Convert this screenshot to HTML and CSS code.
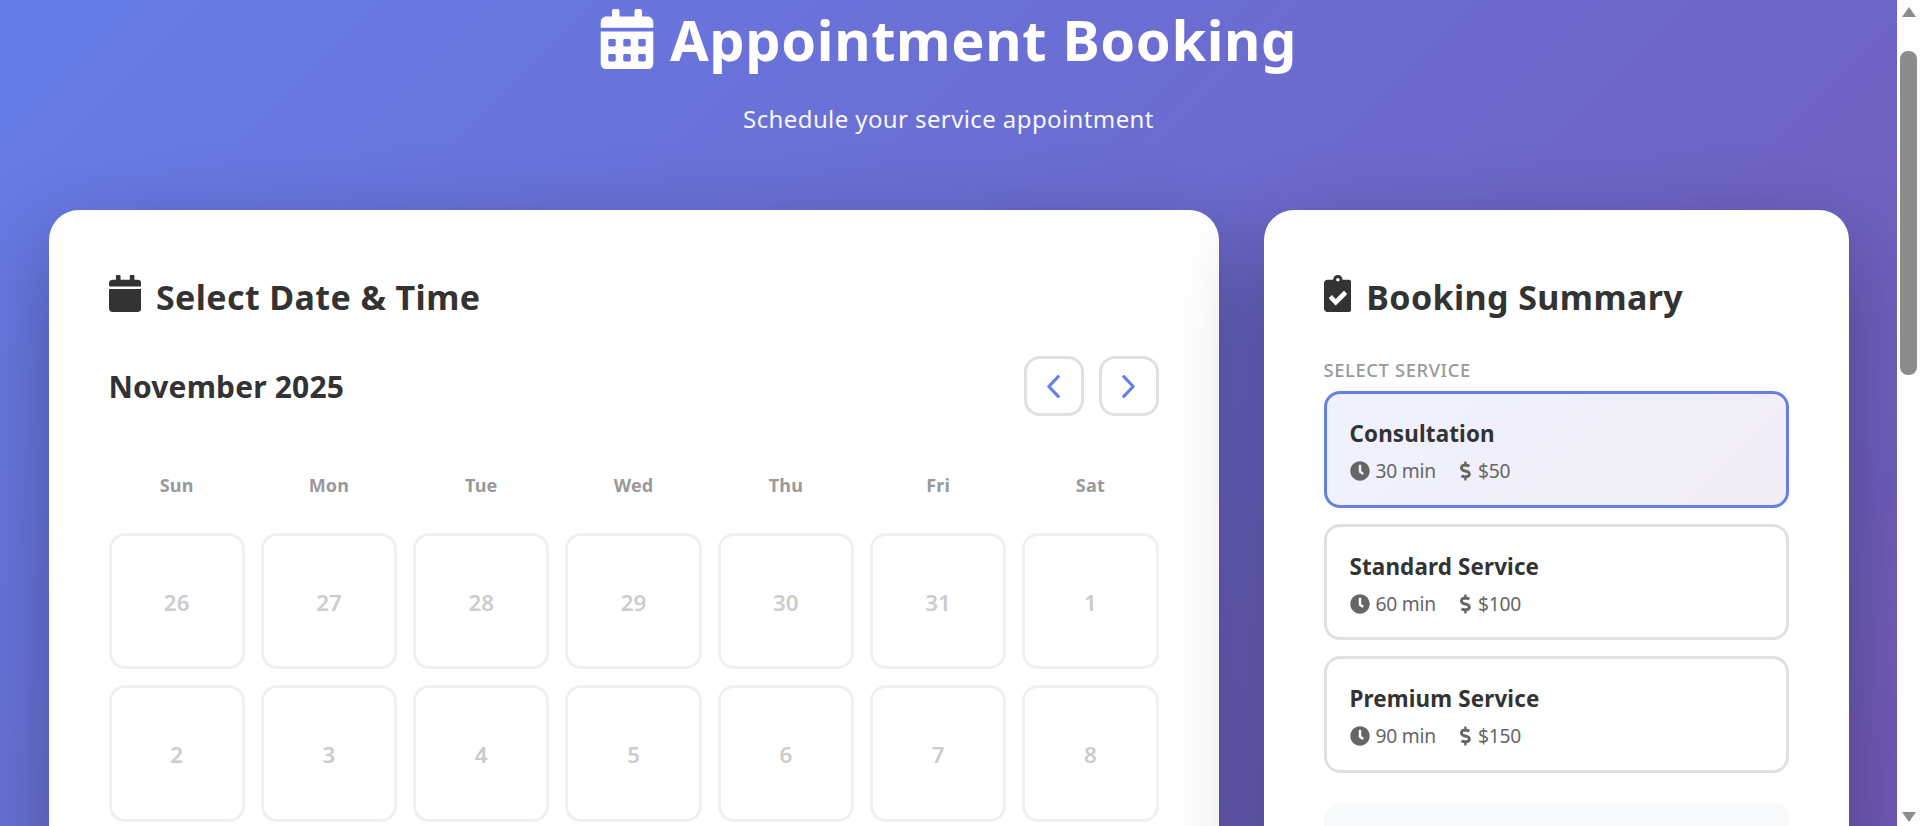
FILE: index.html
```html
<!DOCTYPE html>
<html lang="en">
<head>
  <meta charset="UTF-8">
  <meta name="viewport" content="width=device-width, initial-scale=1.0">
  <title>Appointment Booking</title>
  <link rel="stylesheet" href="styles.css">
</head>
<body>
  <div class="viewport">
    <div class="page">
      <header class="page-header">
        <h1>
          <svg class="h1-icon" viewBox="0 0 448 512"><path d="M0 464c0 26.5 21.5 48 48 48h352c26.5 0 48-21.5 48-48V192H0v272zm320-196c0-6.6 5.4-12 12-12h40c6.6 0 12 5.4 12 12v40c0 6.6-5.4 12-12 12h-40c-6.6 0-12-5.4-12-12v-40zm0 128c0-6.6 5.4-12 12-12h40c6.6 0 12 5.4 12 12v40c0 6.6-5.4 12-12 12h-40c-6.6 0-12-5.4-12-12v-40zM192 268c0-6.6 5.4-12 12-12h40c6.6 0 12 5.4 12 12v40c0 6.6-5.4 12-12 12h-40c-6.6 0-12-5.4-12-12v-40zm0 128c0-6.6 5.4-12 12-12h40c6.6 0 12 5.4 12 12v40c0 6.6-5.4 12-12 12h-40c-6.6 0-12-5.4-12-12v-40zM64 268c0-6.6 5.4-12 12-12h40c6.6 0 12 5.4 12 12v40c0 6.6-5.4 12-12 12H76c-6.6 0-12-5.4-12-12v-40zm0 128c0-6.6 5.4-12 12-12h40c6.6 0 12 5.4 12 12v40c0 6.6-5.4 12-12 12H76c-6.6 0-12-5.4-12-12v-40zM400 64h-48V16c0-8.8-7.2-16-16-16h-32c-8.8 0-16 7.2-16 16v48H160V16c0-8.8-7.2-16-16-16h-32c-8.8 0-16 7.2-16 16v48H48C21.5 64 0 85.5 0 112v48h448v-48c0-26.5-21.5-48-48-48z"/></svg>
          Appointment Booking
        </h1>
        <p class="subtitle">Schedule your service appointment</p>
      </header>

      <main class="layout">
        <section class="card">
          <h2 class="card-title">
            <svg class="title-icon" viewBox="0 0 448 512"><path d="M12 192h424c6.6 0 12 5.4 12 12v260c0 26.5-21.5 48-48 48H48c-26.5 0-48-21.5-48-48V204c0-6.6 5.4-12 12-12zm436-44v-36c0-26.5-21.5-48-48-48h-48V12c0-6.6-5.4-12-12-12h-40c-6.6 0-12 5.4-12 12v52H160V12c0-6.6-5.4-12-12-12h-40c-6.6 0-12 5.4-12 12v52H48C21.5 64 0 85.5 0 112v36c0 6.6 5.4 12 12 12h424c6.6 0 12-5.4 12-12z"/></svg>
            Select Date &amp; Time
          </h2>
          <div class="month-bar">
            <span class="month-name">November 2025</span>
            <div class="month-nav">
              <button class="nav-btn"><svg viewBox="0 0 12 22"><polyline points="10.5,1.5 1.5,11 10.5,20.5"/></svg></button>
              <button class="nav-btn"><svg viewBox="0 0 12 22"><polyline points="1.5,1.5 10.5,11 1.5,20.5"/></svg></button>
            </div>
          </div>
          <div class="calendar">
            <div class="weekday">Sun</div>
            <div class="weekday">Mon</div>
            <div class="weekday">Tue</div>
            <div class="weekday">Wed</div>
            <div class="weekday">Thu</div>
            <div class="weekday">Fri</div>
            <div class="weekday">Sat</div>
            <div class="day">26</div>
            <div class="day">27</div>
            <div class="day">28</div>
            <div class="day">29</div>
            <div class="day">30</div>
            <div class="day">31</div>
            <div class="day">1</div>
            <div class="day">2</div>
            <div class="day">3</div>
            <div class="day">4</div>
            <div class="day">5</div>
            <div class="day">6</div>
            <div class="day">7</div>
            <div class="day">8</div>
          </div>
        </section>

        <aside class="card">
          <h2 class="card-title">
            <svg class="title-icon" viewBox="0 0 384 512"><path d="M336 64h-80c0-35.3-28.7-64-64-64s-64 28.7-64 64H48C21.5 64 0 85.5 0 112v352c0 26.5 21.5 48 48 48h288c26.5 0 48-21.5 48-48V112c0-26.5-21.5-48-48-48zM192 40c13.3 0 24 10.7 24 24s-10.7 24-24 24-24-10.7-24-24 10.7-24 24-24zm121.2 231.8l-143 141.8c-4.7 4.7-12.3 4.6-17-.1l-82.6-83.3c-4.7-4.7-4.6-12.3.1-17L99.1 285c4.7-4.7 12.3-4.6 17 .1l46 46.4 106-105.2c4.7-4.7 12.3-4.6 17 .1l28.2 28.4c4.7 4.8 4.6 12.3-.1 17z"/></svg>
            Booking Summary
          </h2>
          <div class="field-label">Select Service</div>
          <div class="service-list">
            <div class="service selected">
              <div class="service-name">Consultation</div>
              <div class="service-meta">
                <span class="meta-item"><svg class="clock" viewBox="0 0 512 512"><path d="M256,8C119,8,8,119,8,256S119,504,256,504,504,393,504,256,393,8,256,8Zm92.49,313h0l-20,25a16,16,0,0,1-22.49,2.5h0l-67-49.72a40,40,0,0,1-15-31.23V112a16,16,0,0,1,16-16h32a16,16,0,0,1,16,16V256l58,42.5A16,16,0,0,1,348.49,321Z"/></svg>30 min</span>
                <span class="meta-item"><svg class="dollar" viewBox="0 0 320 512"><path d="M209.2 233.4l-108-31.6C88.7 198.2 80 186.5 80 173.5c0-16.3 13.2-29.5 29.5-29.5h66.3c12.2 0 24.2 3.7 34.2 10.5 6.1 4.1 14.3 3.1 19.5-2l34.8-34c7.1-6.9 6.1-18.4-1.8-24.5C238 74.8 207.4 64.1 176 64V16c0-8.8-7.2-16-16-16h-32c-8.8 0-16 7.2-16 16v48h-2.5C45.8 64-5.4 118.7.5 183.6c4.2 46.1 39.4 83.6 83.8 96.6l102.5 30c12.5 3.7 21.2 15.3 21.2 28.3 0 16.3-13.2 29.5-29.5 29.5h-66.3C100 368 88 364.3 78 357.5c-6.1-4.1-14.3-3.1-19.5 2l-34.8 34c-7.1 6.9-6.1 18.4 1.8 24.5 24.5 19.2 55.1 29.9 86.5 30v48c0 8.8 7.2 16 16 16h32c8.8 0 16-7.2 16-16v-48.2c46.6-.9 90.3-28.6 105.7-72.7 21.5-61.6-14.6-124.8-72.5-141.7z"/></svg>$50</span>
              </div>
            </div>
            <div class="service">
              <div class="service-name">Standard Service</div>
              <div class="service-meta">
                <span class="meta-item"><svg class="clock" viewBox="0 0 512 512"><path d="M256,8C119,8,8,119,8,256S119,504,256,504,504,393,504,256,393,8,256,8Zm92.49,313h0l-20,25a16,16,0,0,1-22.49,2.5h0l-67-49.72a40,40,0,0,1-15-31.23V112a16,16,0,0,1,16-16h32a16,16,0,0,1,16,16V256l58,42.5A16,16,0,0,1,348.49,321Z"/></svg>60 min</span>
                <span class="meta-item"><svg class="dollar" viewBox="0 0 320 512"><path d="M209.2 233.4l-108-31.6C88.7 198.2 80 186.5 80 173.5c0-16.3 13.2-29.5 29.5-29.5h66.3c12.2 0 24.2 3.7 34.2 10.5 6.1 4.1 14.3 3.1 19.5-2l34.8-34c7.1-6.9 6.1-18.4-1.8-24.5C238 74.8 207.4 64.1 176 64V16c0-8.8-7.2-16-16-16h-32c-8.8 0-16 7.2-16 16v48h-2.5C45.8 64-5.4 118.7.5 183.6c4.2 46.1 39.4 83.6 83.8 96.6l102.5 30c12.5 3.7 21.2 15.3 21.2 28.3 0 16.3-13.2 29.5-29.5 29.5h-66.3C100 368 88 364.3 78 357.5c-6.1-4.1-14.3-3.1-19.5 2l-34.8 34c-7.1 6.9-6.1 18.4 1.8 24.5 24.5 19.2 55.1 29.9 86.5 30v48c0 8.8 7.2 16 16 16h32c8.8 0 16-7.2 16-16v-48.2c46.6-.9 90.3-28.6 105.7-72.7 21.5-61.6-14.6-124.8-72.5-141.7z"/></svg>$100</span>
              </div>
            </div>
            <div class="service">
              <div class="service-name">Premium Service</div>
              <div class="service-meta">
                <span class="meta-item"><svg class="clock" viewBox="0 0 512 512"><path d="M256,8C119,8,8,119,8,256S119,504,256,504,504,393,504,256,393,8,256,8Zm92.49,313h0l-20,25a16,16,0,0,1-22.49,2.5h0l-67-49.72a40,40,0,0,1-15-31.23V112a16,16,0,0,1,16-16h32a16,16,0,0,1,16,16V256l58,42.5A16,16,0,0,1,348.49,321Z"/></svg>90 min</span>
                <span class="meta-item"><svg class="dollar" viewBox="0 0 320 512"><path d="M209.2 233.4l-108-31.6C88.7 198.2 80 186.5 80 173.5c0-16.3 13.2-29.5 29.5-29.5h66.3c12.2 0 24.2 3.7 34.2 10.5 6.1 4.1 14.3 3.1 19.5-2l34.8-34c7.1-6.9 6.1-18.4-1.8-24.5C238 74.8 207.4 64.1 176 64V16c0-8.8-7.2-16-16-16h-32c-8.8 0-16 7.2-16 16v48h-2.5C45.8 64-5.4 118.7.5 183.6c4.2 46.1 39.4 83.6 83.8 96.6l102.5 30c12.5 3.7 21.2 15.3 21.2 28.3 0 16.3-13.2 29.5-29.5 29.5h-66.3C100 368 88 364.3 78 357.5c-6.1-4.1-14.3-3.1-19.5 2l-34.8 34c-7.1 6.9-6.1 18.4 1.8 24.5 24.5 19.2 55.1 29.9 86.5 30v48c0 8.8 7.2 16 16 16h32c8.8 0 16-7.2 16-16v-48.2c46.6-.9 90.3-28.6 105.7-72.7 21.5-61.6-14.6-124.8-72.5-141.7z"/></svg>$150</span>
              </div>
            </div>
          </div>
          <div class="summary-box"></div>
        </aside>
      </main>
    </div>
  </div>

  <div class="scrollbar">
    <div class="arrow-up"></div>
    <div class="track"><div class="thumb"></div></div>
    <div class="arrow-down"></div>
  </div>
</body>
</html>
```

FILE: styles.css
```css
* {
  box-sizing: border-box;
}
body {
  margin: 0;
  height: 826px;
  overflow: hidden;
  display: flex;
  font-family: "Noto Sans", "Open Sans", sans-serif;
  color: #333;
}
.viewport {
  flex: 1;
  min-width: 0;
  overflow: hidden;
}
/* the page as it sits after being scrolled down 74px */
.page {
  height: 1995px;
  margin-top: -74px;
  padding: 0 48.5px;
  background: linear-gradient(135deg, #667eea 0%, #764ba2 100%);
}
.page-header {
  height: 284px;
  padding-top: 75px;
  text-align: center;
  color: white;
}
h1 {
  margin: 0;
  font-size: 56px;
  line-height: 76px;
  font-weight: 700;
  letter-spacing: 0.6px;
  display: flex;
  justify-content: center;
  align-items: center;
  gap: 16px;
}
.h1-icon {
  width: 54px;
  height: 60px;
  fill: white;
}
.subtitle {
  margin: 27px 0 0;
  font-size: 24px;
  line-height: 30px;
  letter-spacing: 0.4px;
  opacity: 0.95;
}
.layout {
  display: grid;
  grid-template-columns: 2fr 1fr;
  gap: 45px;
}
.card {
  height: 1400px;
  background: white;
  border-radius: 30px;
  padding: 60px;
  box-shadow: 0 30px 90px rgba(0, 0, 0, 0.3);
}
.card-title {
  margin: 0;
  font-size: 34px;
  line-height: 54px;
  font-weight: 700;
  letter-spacing: 0.4px;
  display: flex;
  align-items: center;
  gap: 15px;
}
.title-icon {
  height: 37px;
  margin-top: -7px;
  fill: #333;
}
.month-bar {
  display: flex;
  justify-content: space-between;
  align-items: center;
  margin-top: 32px;
}
.month-name {
  margin-top: 2px;
  font-size: 30px;
  line-height: 40px;
  font-weight: 700;
  letter-spacing: 0.15px;
}
.month-nav {
  display: flex;
  gap: 15px;
}
.nav-btn {
  width: 60px;
  height: 60px;
  padding: 0;
  background: white;
  border: 3px solid #e0e0e0;
  border-radius: 16px;
  display: flex;
  justify-content: center;
  align-items: center;
}
.nav-btn svg {
  width: 13px;
  height: 23px;
  fill: none;
  stroke: #667eea;
  stroke-width: 3;
  stroke-linecap: round;
  stroke-linejoin: round;
}
.calendar {
  display: grid;
  grid-template-columns: repeat(7, 1fr);
  gap: 16px;
  margin-top: 37px;
}
.weekday {
  height: 64px;
  display: flex;
  justify-content: center;
  align-items: center;
  font-size: 18px;
  font-weight: 700;
  letter-spacing: 0.2px;
  color: #999;
}
.day {
  aspect-ratio: 1;
  padding-top: 2px;
  border: 3px solid #f0f0f0;
  border-radius: 16px;
  display: flex;
  justify-content: center;
  align-items: center;
  font-size: 22.4px;
  font-weight: 600;
  color: #ccc;
}
.field-label {
  margin-top: 34px;
  font-size: 18.4px;
  line-height: 24px;
  font-weight: 500;
  letter-spacing: 0.6px;
  text-transform: uppercase;
  color: #999;
}
.service-list {
  display: flex;
  flex-direction: column;
  gap: 16px;
  margin-top: 9px;
}
.service {
  height: 116.6px;
  padding: 25px 23px;
  border: 3px solid #e0e0e0;
  border-radius: 16px;
}
.service.selected {
  border-color: #667eea;
  background: linear-gradient(135deg, rgba(102, 126, 234, 0.1), rgba(118, 75, 162, 0.1));
}
.service-name {
  font-size: 22.4px;
  line-height: 30px;
  font-weight: 700;
  letter-spacing: 0.15px;
}
.service-meta {
  display: flex;
  gap: 24px;
  margin-top: 9px;
  font-size: 19.2px;
  line-height: 26px;
  letter-spacing: -0.2px;
  color: #666;
}
.meta-item {
  display: flex;
  align-items: center;
  gap: 6px;
}
.clock {
  width: 20px;
  height: 20px;
  fill: #666;
}
.dollar {
  width: 12px;
  height: 20px;
  fill: #666;
}
.summary-box {
  height: 300px;
  margin-top: 30px;
  background: #f8f9fa;
  border-radius: 16px;
}
.scrollbar {
  width: 23px;
  flex: none;
  background: #fdfdfd;
  display: flex;
  flex-direction: column;
  align-items: center;
}
.arrow-up, .arrow-down {
  flex: none;
  width: 0;
  height: 0;
  border-left: 7px solid transparent;
  border-right: 7px solid transparent;
}
.arrow-up {
  margin: 7px 0 5px;
  border-bottom: 10px solid #8c8c8c;
}
.arrow-down {
  margin: 5px 0 4px;
  border-top: 10px solid #8c8c8c;
}
.track {
  flex: 1;
  width: 100%;
  padding: 29px 3px 0;
}
.thumb {
  height: 324px;
  background: #8c8c8c;
  border-radius: 8px;
}
```
